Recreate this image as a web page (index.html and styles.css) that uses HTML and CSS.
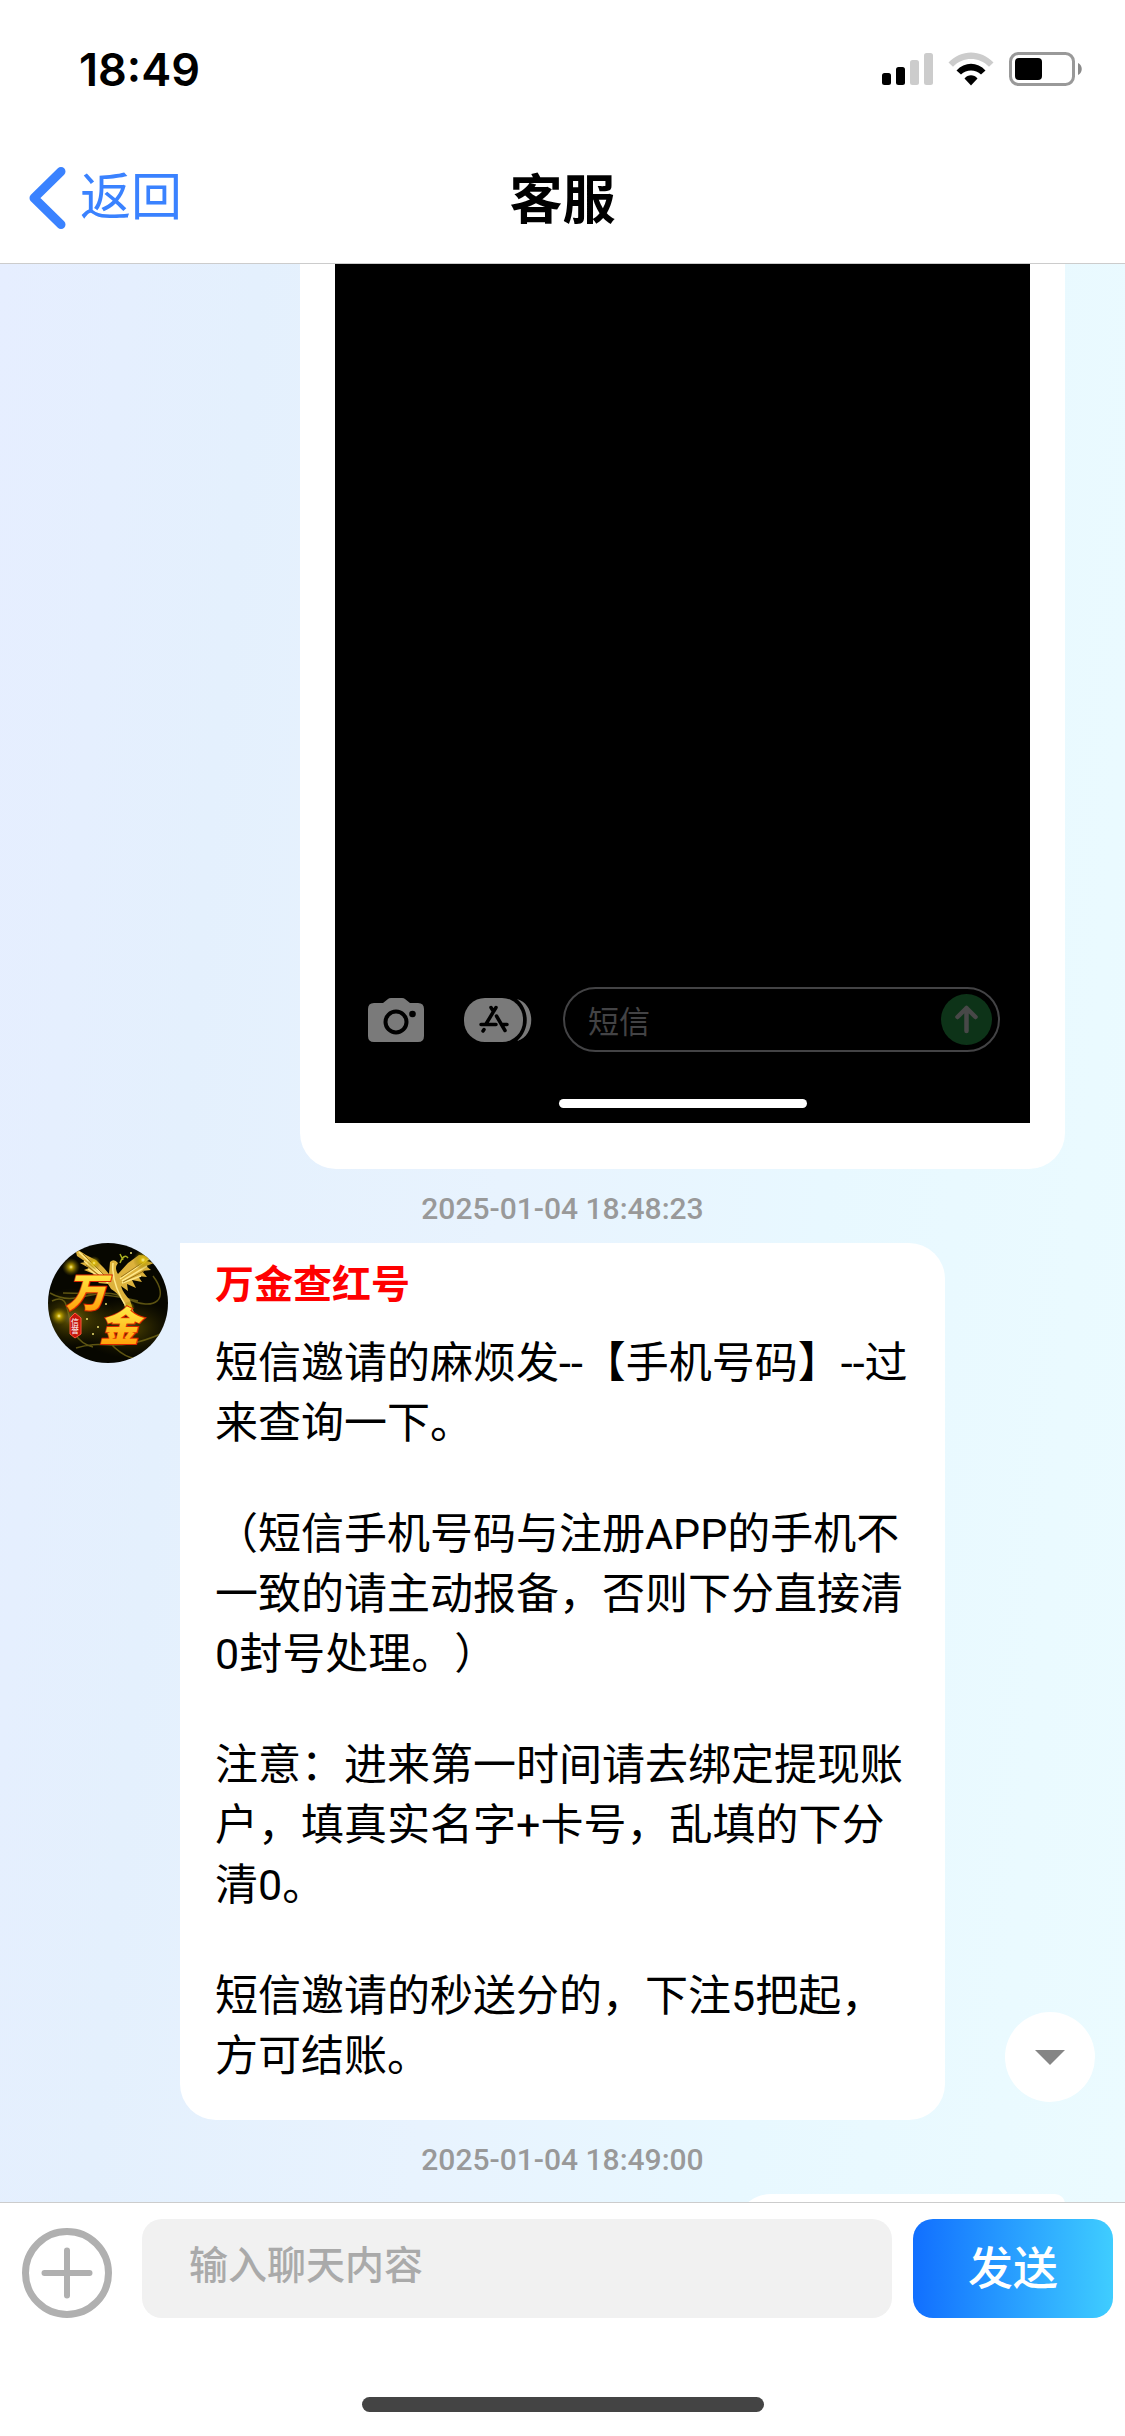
FILE: index.html
```html
<!DOCTYPE html>
<html lang="zh-CN">
<head>
  <meta charset="UTF-8" />
  <meta name="viewport" content="width=device-width, initial-scale=1.0"/>
  <title>客服</title>
  <link rel="stylesheet" href="styles.css">
</head>
<body>
  <div class="app">
    <div class="status-bar">
      <span class="time">18:49</span>
      <div class="status-icons">
        <svg width="51" height="34" viewBox="0 0 51 34">
          <rect x="0" y="21" width="9" height="12" rx="2.5"/>
          <rect x="14" y="15" width="9" height="18" rx="2.5"/>
          <rect x="28" y="8" width="9" height="25" rx="2.5" fill="#ccc"/>
          <rect x="42" y="1" width="9" height="32" rx="2.5" fill="#ccc"/>
        </svg>
        <svg width="46" height="34" viewBox="0 0 46 34">
          <path d="M0.5 10.5C13 -3 33 -3 45.500 10.500L41 14.800C31 4.500 15 4.500 5 14.800Z" fill="#ccc"/>
          <path d="M8.500 18.500C16.500 9.500 29.500 9.500 37.500 18.500L33 22.500C27.500 17 18.500 17 13 22.500Z"/>
          <path d="M16.500 26.500C20 22.300 26 22.300 29.500 26.500L23 33.500Z"/>
        </svg>
        <svg width="74" height="34" viewBox="0 0 74 34">
          <rect x="1.500" y="1.500" width="63" height="31" rx="8" fill="none" stroke="#999" stroke-width="3"/>
          <rect x="6" y="6" width="27" height="22" rx="4"/>
          <path d="M69 11C74 13 74 21 69 23Z" fill="#8a8a8a"/>
        </svg>
      </div>
    </div>

    <header class="nav">
      <a class="back" href="#">
        <svg width="37" height="62" viewBox="0 0 37 62">
          <path d="M32 4.500L5 31L32 57.500" fill="none" stroke="#3a82ff" stroke-width="9" stroke-linecap="round" stroke-linejoin="round"/>
        </svg>
        返回
      </a>
      <h1 class="title">客服</h1>
    </header>

    <main class="chat">
      <div class="row mine">
        <div class="bubble photo-bubble">
          <div class="photo">
            <div class="photo-bar">
              <svg width="56" height="44" viewBox="0 0 56 44">
                <path d="M6 5H15L20 1Q21 0 23 0H34Q36 0 37 1L42 5H50Q56 5 56 11V38Q56 44 50 44H6Q0 44 0 38V11Q0 5 6 5Z" fill="#7a7a7a"/>
                <circle cx="28" cy="24" r="10.500" fill="none" stroke="#000" stroke-width="4"/>
                <circle cx="44.500" cy="16" r="3.300"/>
              </svg>
              <svg width="68" height="44" viewBox="0 0 68 44">
                <rect width="59" height="44" rx="21" fill="#7a7a7a"/>
                <path d="M53 1C72 6 72 38 53 43C66 32 66 12 53 1Z" fill="#7a7a7a"/>
                <path d="M27 9.500L29.500 13.500M32 9.500L22 26M17 26.500H32M38 26.500H43M32.500 18L41 32.500M20 31.500L19 33" fill="none" stroke="#000" stroke-width="3.500" stroke-linecap="round"/>
              </svg>
              <div class="photo-input">
                <span>短信</span>
                <svg width="51" height="51" viewBox="0 0 51 51">
                  <circle cx="25.500" cy="25.500" r="25.500" fill="#0d3318"/>
                  <path d="M25.500 37V14M16.500 23L25.500 14L34.500 23" fill="none" stroke="#484848" stroke-width="4.500" stroke-linecap="round" stroke-linejoin="round"/>
                </svg>
              </div>
            </div>
            <div class="photo-home"></div>
          </div>
        </div>
      </div>

      <time class="stamp">2025-01-04 18:48:23</time>

      <div class="row">
        <svg class="avatar" viewBox="0 0 120 120">
          <defs>
            <clipPath id="round"><circle cx="60" cy="60" r="60"/></clipPath>
            <radialGradient id="glow">
              <stop offset="0" stop-color="#fff59a"/>
              <stop offset="0.25" stop-color="#d8b800" stop-opacity="0.8"/>
              <stop offset="1" stop-color="#6a5c00" stop-opacity="0"/>
            </radialGradient>
            <linearGradient id="gold" x1="0" y1="0" x2="0" y2="1">
              <stop offset="0" stop-color="#fff04a"/>
              <stop offset="1" stop-color="#ff9500"/>
            </linearGradient>
          </defs>
          <g clip-path="url(#round)">
            <rect width="120" height="120" fill="#070700"/>
            <ellipse cx="25" cy="75" rx="42" ry="30" fill="url(#glow)" opacity="0.4"/>
            <ellipse cx="80" cy="85" rx="48" ry="30" fill="url(#glow)" opacity="0.3"/>
            <path d="M2 50C30 66 48 40 78 55S122 55 105 33M4 58C30 45 10 96 45 104M28 105C60 95 65 112 115 90M60 98Q85 125 100 110M15 50Q60 50 90 58" fill="none" stroke="#807318" stroke-width="1.500" opacity="0.7"/>
            <circle cx="23" cy="24" r="9" fill="url(#glow)"/>
            <circle cx="11" cy="73" r="9" fill="url(#glow)"/>
            <path d="M27 5L38 12L48 17L56 25L61 31L62 19Q66 15 70 20Q66 25 70 31L80 20L91 12L104 13L98 18L106 20L98 23L103 27L94 28L99 34L90 33L94 39L84 37L88 45L79 41L80 48L73 43Q75 50 82 57L86 70L81 65L80 74L75 58Q70 50 63 46L60 41L50 40L53 37L42 34L46 31L36 27L41 25L32 20L38 19L29 13Z" fill="#ddb23c"/>
            <path d="M31 9L59 36M36 18L61 39M40 26L60 40M102 15L72 36M99 23L74 38M93 33L74 40M65 20Q63 40 79 65" fill="none" stroke="#ffe98a" stroke-width="1.500"/>
            <path d="M35 11L57 33M38 22L58 38M97 18L73 34M96 28L75 39" fill="none" stroke="#9b7418"/>
            <path d="M72 20Q76 10 80 15M75 17L72 11" fill="none" stroke="#a8b020" stroke-width="1.500"/>
            <circle cx="46" cy="20" r="7" fill="url(#glow)"/>
            <circle cx="95" cy="17" r="10" fill="url(#glow)"/>
            <circle cx="81" cy="64" r="6" fill="url(#glow)"/>
            <g fill="#eedf70">
              <circle cx="35" cy="35" r="1"/><circle cx="50" cy="84" r="1"/><circle cx="58" cy="61" r="1"/>
              <circle cx="39" cy="76" r="1"/><circle cx="83" cy="10" r="1"/><circle cx="45" cy="91" r="1"/>
            </g>
            <text class="logo-text" x="18" y="64">万</text>
            <text class="logo-text" x="51" y="98">金</text>
            <path d="M27 70L33 75V91L27 95L22 91V75Z" fill="#c5140b" stroke="#ff5938"/>
            <text class="seal-text" x="23" y="82">信</text>
            <text class="seal-text" x="23" y="90">誉</text>
          </g>
        </svg>
        <div class="bubble text-bubble">
          <div class="name">万金查红号</div>
          <p>短信邀请的麻烦发--【手机号码】--过来查询一下。</p>
          <p>（短信手机号码与注册APP的手机不一致的请主动报备，否则下分直接清0封号处理。）</p>
          <p>注意：进来第一时间请去绑定提现账户，填真实名字+卡号，乱填的下分清0。</p>
          <p>短信邀请的秒送分的，下注5把起，方可结账。</p>
        </div>
      </div>

      <time class="stamp">2025-01-04 18:49:00</time>

      <div class="row mine">
        <div class="bubble next-bubble"></div>
      </div>

      <button class="to-bottom" aria-label="滚动到底部">
        <svg width="30" height="15" viewBox="0 0 30 15"><path d="M0 0H30L15 15Z" fill="#858585"/></svg>
      </button>
    </main>

    <footer class="footer">
      <form class="composer">
        <button class="plus" type="button" aria-label="更多">
          <svg width="90" height="90" viewBox="0 0 90 90">
            <circle cx="45" cy="45" r="41.500" fill="none" stroke="#b0b0b0" stroke-width="7"/>
            <path d="M45 22.500V67.500M22.500 45H67.500" stroke="#b0b0b0" stroke-width="6" stroke-linecap="round"/>
          </svg>
        </button>
        <input class="message" type="text" placeholder="输入聊天内容" aria-label="输入聊天内容" />
        <button class="send" type="button">发送</button>
      </form>
      <div class="home"></div>
    </footer>
  </div>
</body>
</html>
```

FILE: styles.css
```css
* {
  box-sizing: border-box;
}

body {
  margin: 0;
  background: #fff;
  font-family: Roboto, "Noto Sans CJK SC", sans-serif;
  text-spacing-trim: space-all;
  color: #000;
}

button {
  padding: 0;
  border: none;
  background: none;
  font-family: inherit;
  cursor: pointer;
}

svg {
  display: block;
  flex: none;
}

.app {
  display: flex;
  flex-direction: column;
  height: 100vh;
}

/* top */
.status-bar {
  display: flex;
  align-items: center;
  justify-content: space-between;
  height: 138px;
  padding: 0 42px 0 79px;
}

.time {
  font-family: Inter, sans-serif;
  font-size: 45px;
  font-weight: 600;
}

.status-icons {
  display: flex;
  gap: 15px;
}

.nav {
  display: grid;
  grid-template-columns: 1fr auto 1fr;
  align-items: center;
  height: 126px;
  padding: 0 29px;
  border-bottom: 1px solid #ccc;
}

.back {
  display: flex;
  align-items: center;
  gap: 14px;
  padding-bottom: 6px;
  color: #3a82ff;
  font-size: 51px;
  line-height: 60px;
  text-decoration: none;
}

.title {
  margin: 0;
  font-size: 53px;
  font-weight: 700;
  line-height: 60px;
}

/* messages */
.chat {
  position: relative;
  flex: 1;
  min-height: 0;
  overflow: hidden;
  background: linear-gradient(95deg, #e6eeff, #e4f0fd 20%, #e8f3fe 45%, #e8f8ff 70%, #ebfbff);
}

.row {
  display: flex;
  gap: 12px;
  padding: 0 48px;
}

.mine {
  justify-content: flex-end;
  padding-right: 60px;
}

.bubble {
  width: 68vw;
  background: #fff;
  border-radius: 36px;
}

.photo-bubble {
  padding: 0 35px 46px;
  border-top-left-radius: 0;
  border-top-right-radius: 0;
}

.photo {
  display: flex;
  flex-direction: column;
  justify-content: flex-end;
  height: 859px;
  padding: 0 30px 15px;
  background: #000;
}

.photo-bar {
  display: flex;
  align-items: center;
  gap: 31px;
  padding-left: 3px;
}

.photo-bar svg:first-child {
  margin-right: 9px;
}

.photo-input {
  display: flex;
  flex: 1;
  align-items: center;
  justify-content: space-between;
  height: 65px;
  padding: 0 6px 0 23px;
  border: 2px solid #434345;
  border-radius: 33px;
  color: #434345;
  font-size: 31px;
}

.photo-home {
  width: 248px;
  height: 9px;
  margin: 47px auto 0;
  border-radius: 5px;
  background: #fff;
}

.stamp {
  display: block;
  padding: 22px 0 16px;
  color: #999;
  font-size: 30px;
  font-weight: 500;
  line-height: 36px;
  text-align: center;
}

.avatar {
  width: 120px;
  height: 120px;
}

.logo-text {
  fill: url(#gold);
  stroke: #d92600;
  stroke-width: 2px;
  paint-order: stroke;
  font-size: 40px;
  font-style: italic;
  font-weight: 900;
}

.seal-text {
  fill: #fff;
  font-size: 8px;
}

.text-bubble {
  padding: 18px 35px 34px;
  border-top-left-radius: 0;
}

.name {
  margin-bottom: 24px;
  color: #f00;
  font-size: 39px;
  font-weight: 700;
  line-height: 48px;
}

.text-bubble p {
  margin: 0 0 51px;
  font-size: 43px;
  line-height: 60px;
}

.text-bubble p:last-child {
  margin-bottom: 0;
}

.next-bubble {
  width: 330px;
  height: 100px;
  border-top-right-radius: 10px;
}

.to-bottom {
  position: absolute;
  right: 30px;
  bottom: 100px;
  display: flex;
  align-items: center;
  justify-content: center;
  width: 90px;
  height: 90px;
  border-radius: 50%;
  background: #fff;
}

/* bottom */
.footer {
  border-top: 1px solid #ccc;
  background: #fff;
}

.composer {
  display: flex;
  align-items: flex-end;
  padding: 16px 12px 0 22px;
}

.message {
  flex: 1;
  min-width: 0;
  height: 99px;
  margin: 0 21px 0 30px;
  padding: 0 47px 6px;
  border: none;
  border-radius: 20px;
  background: #f1f1f1;
  font-family: inherit;
  font-size: 39px;
}

.message::placeholder {
  color: #aaa;
  font-weight: 500;
}

.send {
  width: 200px;
  height: 99px;
  padding-bottom: 6px;
  border-radius: 20px;
  background: linear-gradient(90deg, #116fff, #3fcdff);
  color: #fff;
  font-size: 45px;
  font-weight: 500;
}

.home {
  width: 402px;
  height: 15px;
  margin: 79px auto 24px;
  border-radius: 8px;
  background: #444;
}
```
